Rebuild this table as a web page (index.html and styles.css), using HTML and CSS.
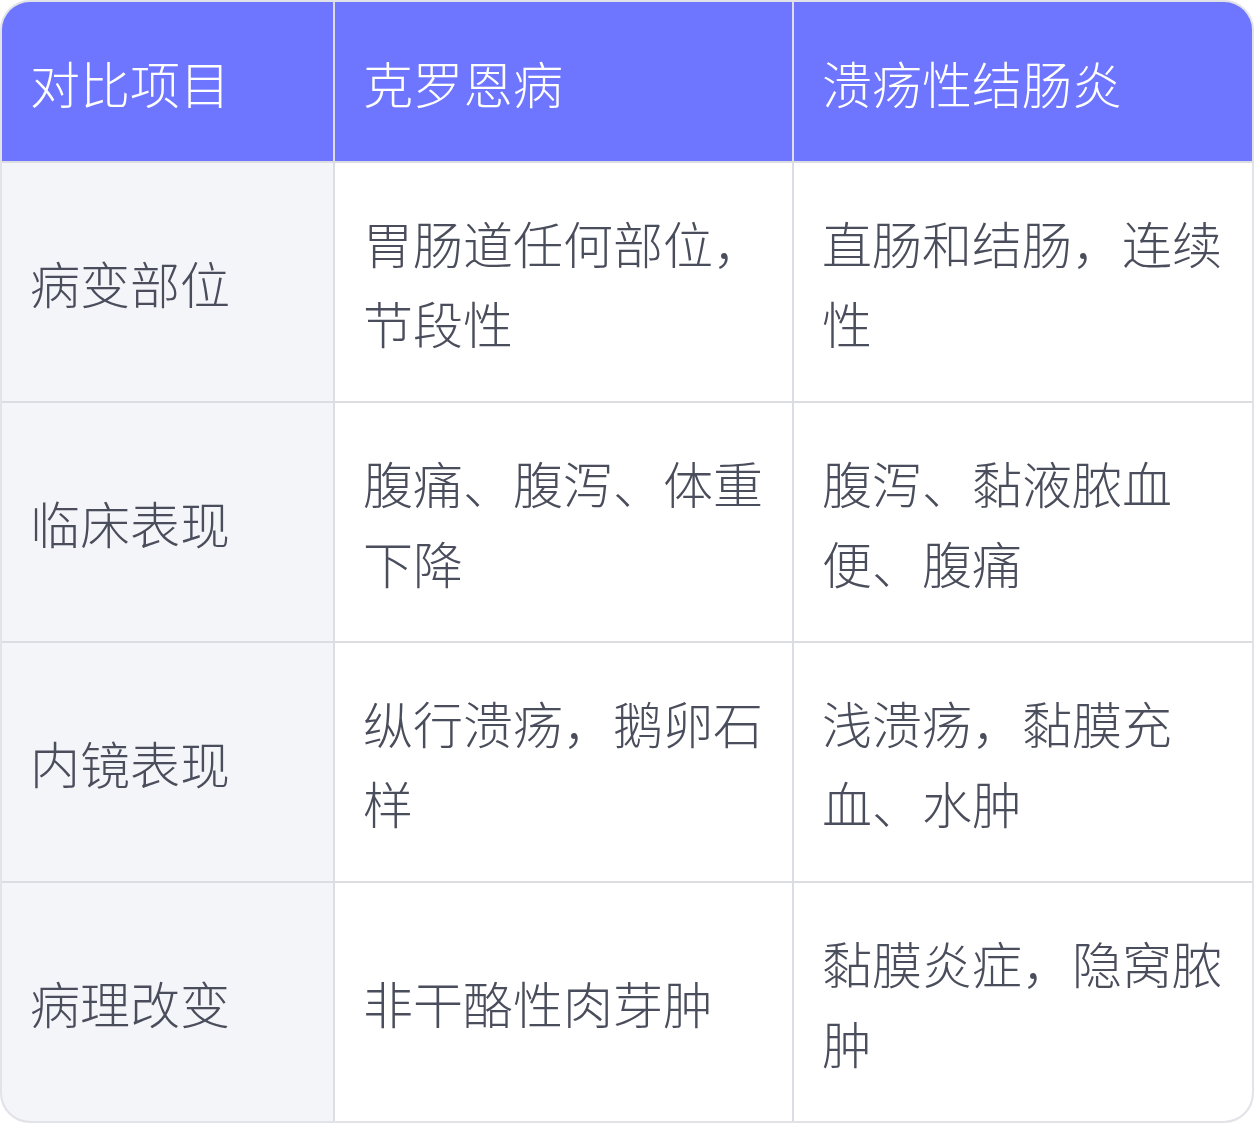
FILE: index.html
```html
<!DOCTYPE html>
<html lang="zh">
<head>
<meta charset="utf-8">
<link rel="stylesheet" href="styles.css">
</head>
<body>
<div class="table">
  <div class="cell head">对比项目</div>
  <div class="cell head">克罗恩病</div>
  <div class="cell head">溃疡性结肠炎</div>

  <div class="cell label">病变部位</div>
  <div class="cell">胃肠道任何部位，节段性</div>
  <div class="cell">直肠和结肠，连续性</div>

  <div class="cell label">临床表现</div>
  <div class="cell">腹痛、腹泻、体重下降</div>
  <div class="cell">腹泻、黏液脓血便、腹痛</div>

  <div class="cell label">内镜表现</div>
  <div class="cell">纵行溃疡，鹅卵石样</div>
  <div class="cell">浅溃疡，黏膜充血、水肿</div>

  <div class="cell label">病理改变</div>
  <div class="cell">非干酪性肉芽肿</div>
  <div class="cell">黏膜炎症，隐窝脓肿</div>
</div>
</body>
</html>
```

FILE: styles.css
```css
html, body {
  margin: 0;
  padding: 0;
  background: #ffffff;
}
.table {
  box-sizing: border-box;
  width: 1254px;
  height: 1123px;
  border: 2px solid #e2e3e8;
  border-radius: 30px;
  overflow: hidden;
  display: grid;
  grid-template-columns: 331px 457px 1fr;
  grid-template-rows: 159px repeat(4, 238px);
  gap: 2px;
  background: #dcdde3;
  font-family: "Noto Sans CJK SC", "Noto Sans", sans-serif;
  font-weight: 300;
  font-size: 50px;
  line-height: 80px;
  color: #4a4d5b;
}
.cell {
  background: #ffffff;
  display: flex;
  align-items: center;
  padding: 0 28px 0 28px;
  word-break: break-all;
}
.head {
  background: #6e75fe;
  color: #ffffff;
}
.label {
  background: #f4f5f9;
}
```
